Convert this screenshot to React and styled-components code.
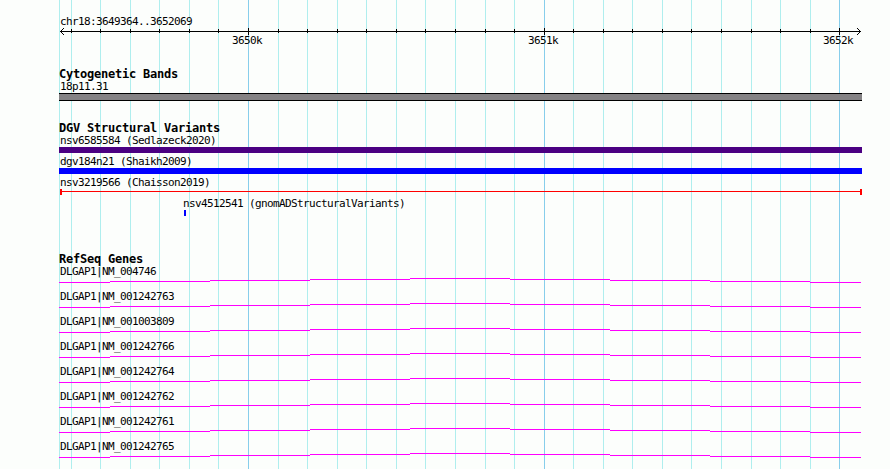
import styled, { createGlobalStyle } from "styled-components";

const GlobalStyle = createGlobalStyle`
  body {
    margin: 0;
    background-color: #fcfefc;
    overflow: hidden;
  }
`;

const Browser = styled.div`
  position: relative;
  box-sizing: border-box;
  width: 890px;
  height: 469px;
  padding: 15px 28px 0 59px;
  overflow: hidden;
  background-color: #fcfefc;
  color: #000;
  font-family: "DejaVu Sans Mono", "Liberation Mono", monospace;
  font-size: 11px;
  line-height: 12px;
`;

const Grid = styled.svg`
  position: absolute;
  top: 0;
  left: 0;
`;

const Content = styled.div`
  position: relative;
  display: flex;
  flex-direction: column;
`;

const Label = styled.div`
  box-sizing: border-box;
  height: 12px;
  padding-top: 1px;
  padding-left: ${(props) => props.$indent || 1}px;
  letter-spacing: -0.622px;
  white-space: pre;
`;

const Title = styled.h2`
  height: 12px;
  margin: 0;
  font-size: 12px;
  font-weight: bold;
  line-height: 12px;
  letter-spacing: -0.224px;
  white-space: pre;
`;

const RulerLine = styled.svg`
  display: block;
  height: 8px;
  margin-top: 1px;
`;

const RulerLabels = styled.div`
  display: grid;
  grid-template-columns: 296px 295px 30px;
  height: 12px;
  margin-top: -1px;
  padding-left: 173px;
  letter-spacing: -0.622px;
`;

const Section = styled.section`
  display: flex;
  flex-direction: column;
  margin-top: ${(props) => props.$top}px;
`;

const Band = styled.div`
  box-sizing: border-box;
  height: 8px;
  margin-top: 1px;
  border: solid #000;
  border-width: 1px 0;
  background-color: #848284;
`;

const Variant = styled.div`
  height: 21px;
`;

const Bar = styled.div`
  width: ${(props) => props.$width || "100%"};
  height: 6px;
  margin-top: 1px;
  margin-left: ${(props) => props.$left || 0}px;
  background-color: ${(props) => props.$color};
`;

const Span = styled.div`
  display: flex;
  align-items: flex-start;
  height: 6px;
  margin: 1px 0 0 1px;
  border: solid #f00;
  border-width: 0 2px;

  &::before {
    content: "";
    flex: 1;
    height: 1px;
    margin-top: 2px;
    background-color: #f00;
  }
`;

const Gene = styled.div`
  height: 25px;
`;

const Intron = styled.svg`
  display: block;
  height: 5px;
  margin-top: 1px;
`;

const minorLines = [
  59, 71, 100, 130, 159, 189, 218, 278, 307, 337, 366, 396, 425, 455, 485, 514,
  573, 603, 632, 662, 691, 721, 751, 780, 810,
];
const majorLines = [248, 544, 839];

const genes = [
  "NM_004746",
  "NM_001242763",
  "NM_001003809",
  "NM_001242766",
  "NM_001242764",
  "NM_001242762",
  "NM_001242761",
  "NM_001242765",
];

// start, end and height of each piece of the stepped intron line
const steps = [
  [0, 51, 4],
  [51, 151, 3],
  [151, 251, 2],
  [251, 351, 1],
  [351, 451, 0],
  [451, 551, 1],
  [551, 651, 2],
  [651, 751, 3],
  [751, 802, 4],
];

const GridLines = () => (
  <Grid width="890" height="469" shapeRendering="crispEdges">
    {minorLines.map((x) => (
      <rect key={x} x={x} y="0" width="1" height="469" fill="#afeeee" />
    ))}
    {majorLines.map((x) => (
      <rect key={x} x={x} y="0" width="1" height="469" fill="#87ceeb" />
    ))}
  </Grid>
);

const Ruler = () => (
  <>
    <RulerLine width="803" height="8" viewBox="59 28 803 8" shapeRendering="crispEdges">
      <rect x="60" y="31" width="801" height="1" />
      <path d="M61 30h1v1h-1zM62 29h1v1h-1zM63 28h1v1h-1zM61 32h1v1h-1zM62 33h1v1h-1zM63 34h1v1h-1z" />
      <path d="M859 30h1v1h-1zM858 29h1v1h-1zM857 28h1v1h-1zM859 32h1v1h-1zM858 33h1v1h-1zM857 34h1v1h-1z" />
      {minorLines.slice(1).map((x) => (
        <rect key={x} x={x} y="29" width="1" height="4" />
      ))}
      {majorLines.map((x) => (
        <rect key={x} x={x} y="28" width="1" height="7" />
      ))}
    </RulerLine>
    <RulerLabels>
      <span>3650k</span>
      <span>3651k</span>
      <span>3652k</span>
    </RulerLabels>
  </>
);

const App = () => {
  return (
    <>
      <GlobalStyle />
      <Browser>
        <GridLines />
        <Content>
          <Label>chr18:3649364..3652069</Label>
          <Ruler />
          <Section $top={21}>
            <Title>Cytogenetic Bands</Title>
            <Label>18p11.31</Label>
            <Band />
          </Section>
          <Section $top={21}>
            <Title>DGV Structural Variants</Title>
            <Variant>
              <Label>nsv6585584 (Sedlazeck2020)</Label>
              <Bar $color="#4b0082" />
            </Variant>
            <Variant>
              <Label>dgv184n21 (Shaikh2009)</Label>
              <Bar $color="#0000ff" />
            </Variant>
            <Variant>
              <Label>nsv3219566 (Chaisson2019)</Label>
              <Span />
            </Variant>
            <Variant>
              <Label $indent={124}>nsv4512541 (gnomADStructuralVariants)</Label>
              <Bar $color="#0000ff" $width="2px" $left={125} />
            </Variant>
          </Section>
          <Section $top={35}>
            <Title>RefSeq Genes</Title>
            {genes.map((gene) => (
              <Gene key={gene}>
                <Label>{`DLGAP1|${gene}`}</Label>
                <Intron width="803" height="5" shapeRendering="crispEdges">
                  {steps.map(([from, to, y]) => (
                    <rect key={from} x={from} y={y} width={to - from} height="1" fill="#ff00ff" />
                  ))}
                </Intron>
              </Gene>
            ))}
          </Section>
        </Content>
      </Browser>
    </>
  );
};

export default App;
